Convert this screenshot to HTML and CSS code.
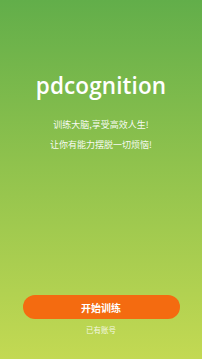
FILE: index.html
```html
<!DOCTYPE html>
<html lang="zh">
<head>
<meta charset="utf-8">
<link rel="stylesheet" href="styles.css">
</head>
<body>
<main class="screen">
  <h1 class="title">pdcognition</h1>
  <div class="slogans">
    <p class="slogan">训练大脑,享受高效人生!</p>
    <p class="slogan">让你有能力摆脱一切烦恼!</p>
  </div>
  <div class="spacer"></div>
  <button class="start">开始训练</button>
  <a class="login">已有账号</a>
</main>
</body>
</html>
```

FILE: styles.css
```css
* { box-sizing: border-box; }
html, body { margin: 0; padding: 0; }
body {
  width: 202px;
  height: 359px;
  overflow: hidden;
  font-family: "Noto Sans CJK SC", "Noto Sans", sans-serif;
}
.screen {
  height: 359px;
  display: flex;
  flex-direction: column;
  align-items: center;
  background: linear-gradient(180deg, #62ae4a 0%, #8fc24d 45%, #c3d953 100%);
  color: #fff;
}
.title {
  margin: 72px 0 0;
  font-family: "Open Sans", Lato, sans-serif;
  font-weight: 600;
  font-size: 22.5px;
  line-height: 28px;
  letter-spacing: 0.1px;
}
.slogans {
  margin-top: 19px;
  display: flex;
  flex-direction: column;
  align-items: center;
  gap: 8px;
}
.slogan {
  margin: 0;
  font-size: 9px;
  line-height: 12px;
  color: rgba(255,255,255,0.95);
}
.spacer { flex: 1; }
.start {
  width: 157px;
  height: 24px;
  border: none;
  border-radius: 12px;
  background: #f46b10;
  color: #fff;
  font-family: "Noto Sans CJK SC", sans-serif;
  font-weight: 700;
  font-size: 10px;
  padding: 0;
}
.login {
  margin: 5px 0 23px;
  font-size: 7.5px;
  line-height: 12px;
  color: rgba(255,255,255,0.85);
}
```
